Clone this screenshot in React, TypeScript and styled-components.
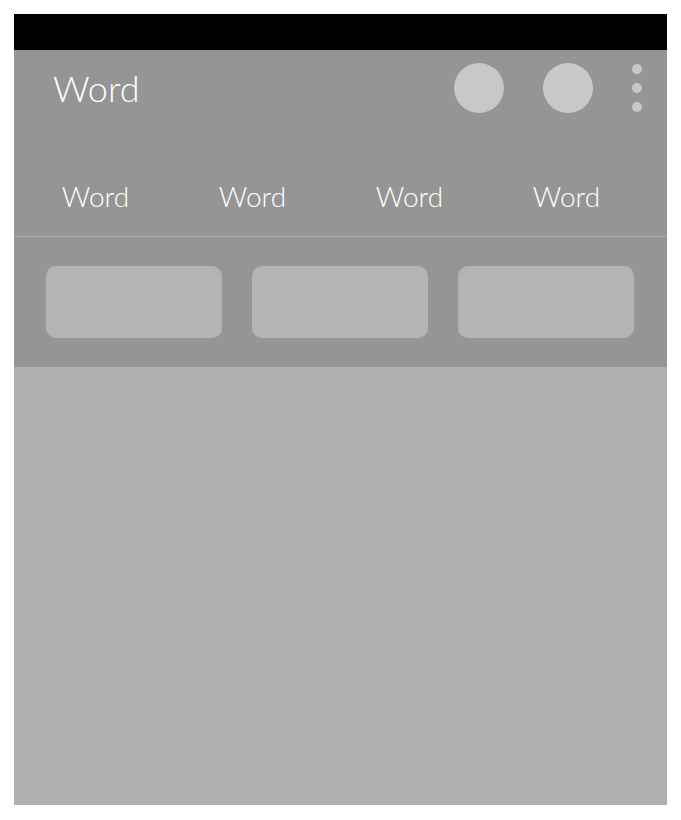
import React from 'react';
import styled, { createGlobalStyle } from 'styled-components';

const GlobalStyle = createGlobalStyle`
    html, body {
        margin: 0;
        padding: 0;
        background: #ffffff;
    }
    body {
        font-family: Lato, "Noto Sans", sans-serif;
    }
`;

const Page = styled.div`
    padding: 14px;
`;

const Phone = styled.div`
    width: 653px;
    height: 791px;
    display: flex;
    flex-direction: column;
    background: #b0b0b0;
`;

const StatusBar = styled.div`
    height: 36px;
    background: #000000;
`;

const AppBar = styled.header`
    background: #959595;
    display: flex;
    flex-direction: column;
`;

const Toolbar = styled.div`
    height: 76px;
    display: flex;
    align-items: center;
    padding: 0 25px 0 39px;
`;

const Title = styled.h1`
    flex: 1;
    margin: 0;
    font-size: 36px;
    font-weight: 300;
    color: #ffffff;
    line-height: 1;
`;

const Actions = styled.div`
    display: flex;
    align-items: center;
    gap: 39px;
`;

const ActionCircle = styled.div`
    width: 50px;
    height: 50px;
    border-radius: 50%;
    background: #c8c8c8;
`;

const Overflow = styled.div`
    display: flex;
    flex-direction: column;
    gap: 9px;
`;

const Dot = styled.span`
    width: 10px;
    height: 10px;
    border-radius: 50%;
    background: #c8c8c8;
`;

const Tabs = styled.nav`
    height: 110px;
    display: flex;
    padding-left: 3px;
    border-bottom: 1px solid #ababab;
`;

const Tab = styled.div`
    width: 157px;
    display: flex;
    justify-content: center;
    padding-top: 56px;
    font-size: 28px;
    font-weight: 300;
    color: #ffffff;
    line-height: 1;
`;

const Chips = styled.div`
    display: flex;
    gap: 30px;
    padding: 29px 32px;
`;

const Chip = styled.div`
    width: 176px;
    height: 72px;
    border-radius: 10px;
    background: #b4b4b4;
`;

const tabs = ['Word', 'Word', 'Word', 'Word'];

export default function App() {
    return (
        <Page>
            <GlobalStyle />
            <Phone>
                <StatusBar />
                <AppBar>
                    <Toolbar>
                        <Title>Word</Title>
                        <Actions>
                            <ActionCircle />
                            <ActionCircle />
                            <Overflow>
                                <Dot />
                                <Dot />
                                <Dot />
                            </Overflow>
                        </Actions>
                    </Toolbar>
                    <Tabs>
                        {tabs.map((t, i) => (
                            <Tab key={i}>{t}</Tab>
                        ))}
                    </Tabs>
                    <Chips>
                        <Chip />
                        <Chip />
                        <Chip />
                    </Chips>
                </AppBar>
            </Phone>
        </Page>
    );
}
